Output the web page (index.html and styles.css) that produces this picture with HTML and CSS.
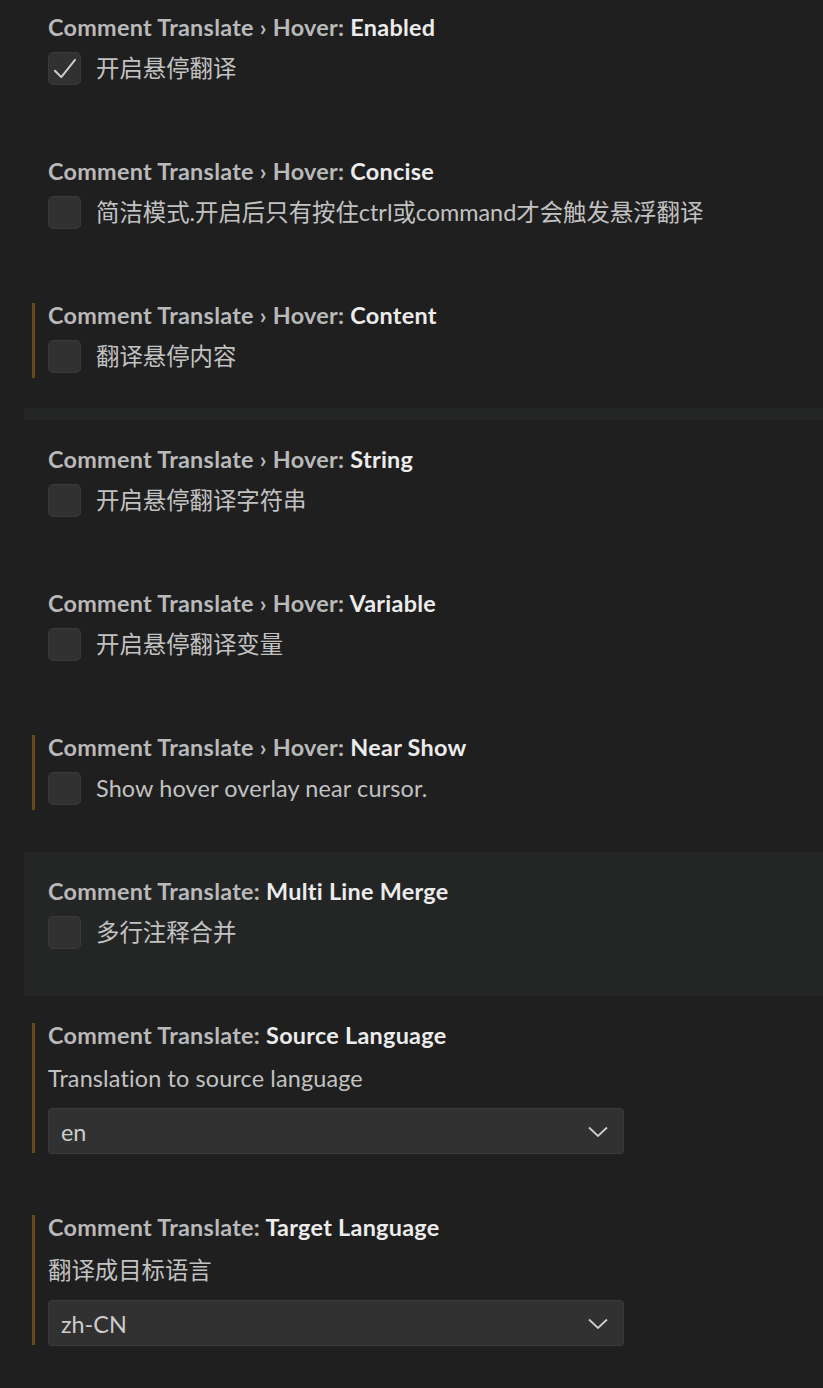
FILE: index.html
```html
<!DOCTYPE html>
<html lang="zh-CN">
<head>
<meta charset="utf-8">
<title>Settings</title>
<link rel="stylesheet" href="styles.css">
</head>
<body>
<div class="list">
  <div class="row">
    <div class="title"><span class="cat">Comment Translate › Hover: </span><span class="label">Enabled</span></div>
    <div class="bool">
      <span class="checkbox">
        <svg viewBox="0 0 34 34" width="33" height="33"><path d="M6.5 19.5 L13.5 26.5 L28.5 7.5" fill="none" stroke="#cccccc" stroke-width="2.2" stroke-linecap="round" stroke-linejoin="round"/></svg>
      </span>
      <span class="desc">开启悬停翻译</span>
    </div>
  </div>
  <div class="row">
    <div class="title"><span class="cat">Comment Translate › Hover: </span><span class="label">Concise</span></div>
    <div class="bool"><span class="checkbox"></span><span class="desc">简洁模式.开启后只有按住ctrl或command才会触发悬浮翻译</span></div>
  </div>
  <div class="row modified band">
    <div class="title"><span class="cat">Comment Translate › Hover: </span><span class="label">Content</span></div>
    <div class="bool"><span class="checkbox"></span><span class="desc">翻译悬停内容</span></div>
  </div>
  <div class="row">
    <div class="title"><span class="cat">Comment Translate › Hover: </span><span class="label">String</span></div>
    <div class="bool"><span class="checkbox"></span><span class="desc">开启悬停翻译字符串</span></div>
  </div>
  <div class="row">
    <div class="title"><span class="cat">Comment Translate › Hover: </span><span class="label">Variable</span></div>
    <div class="bool"><span class="checkbox"></span><span class="desc">开启悬停翻译变量</span></div>
  </div>
  <div class="row modified">
    <div class="title"><span class="cat">Comment Translate › Hover: </span><span class="label">Near Show</span></div>
    <div class="bool"><span class="checkbox"></span><span class="desc latin">Show hover overlay near cursor.</span></div>
  </div>
  <div class="row hovered">
    <div class="title"><span class="cat">Comment Translate: </span><span class="label">Multi Line Merge</span></div>
    <div class="bool"><span class="checkbox"></span><span class="desc">多行注释合并</span></div>
  </div>
  <div class="row modified enum">
    <div class="title"><span class="cat">Comment Translate: </span><span class="label">Source Language</span></div>
    <div class="desc block latin">Translation to source language</div>
    <div class="select"><span>en</span>
      <svg viewBox="0 0 20 12" width="20" height="12"><path d="M1 1.5 L10 10 L19 1.5" fill="none" stroke="#cccccc" stroke-width="1.8"/></svg>
    </div>
  </div>
  <div class="row modified enum">
    <div class="title"><span class="cat">Comment Translate: </span><span class="label">Target Language</span></div>
    <div class="desc block">翻译成目标语言</div>
    <div class="select"><span>zh-CN</span>
      <svg viewBox="0 0 20 12" width="20" height="12"><path d="M1 1.5 L10 10 L19 1.5" fill="none" stroke="#cccccc" stroke-width="1.8"/></svg>
    </div>
  </div>
</div>
</body>
</html>
```

FILE: styles.css
```css
html, body {
  margin: 0;
  padding: 0;
  background: #1f1f1f;
  height: 1388px;
  overflow: hidden;
}
body {
  font-family: Lato, "Noto Sans CJK SC", sans-serif;
  font-size: 23.4px;
  color: #c4c4c4;
}
.list {
  margin-top: -12px;
  padding-left: 24px;
  display: flex;
  flex-direction: column;
}
.row {
  position: relative;
  height: 144px;
  box-sizing: border-box;
  padding: 23px 0 0 24px;
  display: flex;
  flex-direction: column;
}
.row.enum {
  height: 192px;
}
.row.hovered {
  background: #242525;
}
.row.band {
  background: linear-gradient(to bottom, transparent 132px, #242525 132px);
}
.row.modified::before {
  content: "";
  position: absolute;
  left: 8px;
  top: 27px;
  width: 3px;
  height: 75px;
  background: #654a17;
}
.row.enum.modified::before {
  height: 130px;
}
.title {
  line-height: 32px;
  height: 32px;
  font-weight: 700;
  letter-spacing: 0.27px;
  white-space: nowrap;
}
.cat {
  color: #b9b9b9;
}
.label {
  color: #ececec;
}
.bool {
  margin-top: 9px;
  display: flex;
  align-items: center;
  gap: 15px;
}
.checkbox {
  width: 33px;
  height: 33px;
  box-sizing: border-box;
  background: #313131;
  border: 1px solid #3a3a3a;
  border-radius: 5px;
  display: flex;
  align-items: center;
  justify-content: center;
  flex: none;
}
.checkbox svg {
  display: block;
}
.desc {
  color: #c2c2c2;
  line-height: 33px;
  white-space: nowrap;
}
.desc.latin {
  letter-spacing: 0.15px;
}
.desc.block {
  margin-top: 11px;
  line-height: 32px;
}
.select {
  margin-top: 14px;
  width: 576px;
  height: 46px;
  box-sizing: border-box;
  background: #313131;
  border: 1px solid #3a3a3a;
  border-radius: 4px;
  display: flex;
  align-items: center;
  justify-content: space-between;
  padding: 2px 15px 0 12px;
  color: #cccccc;
}
.select svg {
  display: block;
}
```
